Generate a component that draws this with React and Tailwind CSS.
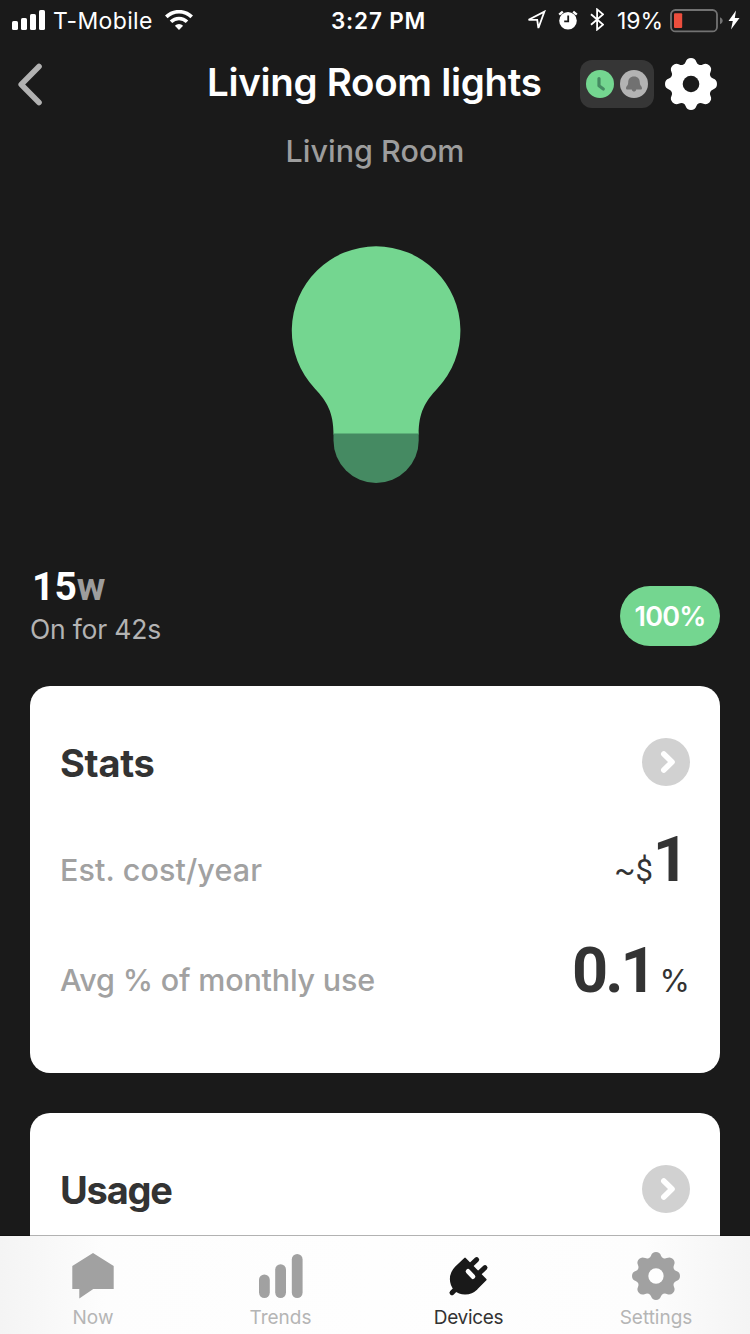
// Gear outline: eight round teeth joined by small concave arcs
const buildGearPath = () => {
  const dist = 20.3;
  const tooth = 5.7;
  const valley = 4.5;
  const half = Math.PI / 8;
  const valleyDist =
    dist * Math.cos(half) + Math.sqrt((tooth + valley) ** 2 - (dist * Math.sin(half)) ** 2);
  const polar = (r, a) => [r * Math.sin(a), -r * Math.cos(a)];
  const touch = (a, b) => {
    const k = tooth / (tooth + valley);
    const x = a[0] + (b[0] - a[0]) * k;
    const y = a[1] + (b[1] - a[1]) * k;
    return `${x.toFixed(2)} ${y.toFixed(2)}`;
  };

  let d = '';
  for (let i = 0; i < 8; i++) {
    const center = polar(dist, i * 2 * half);
    const before = polar(valleyDist, (i * 2 - 1) * half);
    const after = polar(valleyDist, (i * 2 + 1) * half);
    d += i === 0 ? `M${touch(center, before)}` : `A${valley} ${valley} 0 0 0 ${touch(center, before)}`;
    d += `A${tooth} ${tooth} 0 0 1 ${touch(center, after)}`;
  }
  return `${d}A${valley} ${valley} 0 0 0 ${touch(polar(dist, 0), polar(valleyDist, -half))}Z`;
};

const gearPath = buildGearPath();

const Gear = ({ size, color, hole }) => (
  <svg width={size} height={size} viewBox="-26 -26 52 52" className="shrink-0">
    <path d={gearPath} fill={color} />
    <circle r="8.3" fill={hole} />
  </svg>
);

const SignalIcon = () => (
  <svg width="33" height="20" viewBox="0 0 33 20" fill="#fff" className="shrink-0">
    <rect y="11" width="6" height="9" rx="1.6" />
    <rect x="9" y="8" width="6" height="12" rx="1.6" />
    <rect x="18" y="4" width="6" height="16" rx="1.6" />
    <rect x="27" width="6" height="20" rx="1.6" />
  </svg>
);

const WifiIcon = () => (
  <svg width="28" height="20" viewBox="0 0 28 20" className="shrink-0">
    <g fill="none" stroke="#fff" strokeWidth="3.6">
      <path d="M1.300 6.900a18 18 0 0 1 25.400 0" />
      <path d="M6 11.800a11.400 11.400 0 0 1 16 0" />
    </g>
    <path d="M14 20l-4.100-4.200a5.800 5.800 0 0 1 8.200 0z" fill="#fff" />
  </svg>
);

const LocationIcon = () => (
  <svg width="20" height="20" viewBox="0 0 20 20" className="shrink-0">
    <path d="M2.600 9.800L18.400 1.600 12.400 18 11.200 9.900z" fill="none" stroke="#fff" strokeWidth="1.800" />
  </svg>
);

const AlarmIcon = () => (
  <svg width="20" height="20" viewBox="0 0 20 20" className="shrink-0">
    <circle cx="10" cy="10.800" r="8.800" fill="#fff" />
    <path d="M1.200 4.600L4.800 1.600M18.800 4.600l-3.600-3" fill="none" stroke="#fff" strokeWidth="2.400" />
    <path d="M10.200 5.400v6H6.200" fill="none" stroke="#1a1a1a" strokeWidth="1.800" />
  </svg>
);

const BluetoothIcon = () => (
  <svg width="14" height="23" viewBox="0 0 14 23" className="shrink-0">
    <path d="M1 6.200l12 10.400-5.900 5V1.400l5.900 5L1 16.800" fill="none" stroke="#fff" strokeWidth="1.800" />
  </svg>
);

const BatteryIcon = () => (
  <svg width="54" height="24" viewBox="0 0 54 24" className="shrink-0">
    <rect x="1" y="1" width="46" height="21.400" rx="4.500" fill="none" stroke="#727272" strokeWidth="1.800" />
    <rect x="4" y="4.300" width="8.200" height="14.800" rx="1" fill="#eb4e3d" />
    <path d="M50 8.200c3.600 1.600 3.600 5.400 0 7z" fill="#727272" />
  </svg>
);

const BoltIcon = () => (
  <svg width="12" height="20" viewBox="0 0 12 20" className="shrink-0">
    <path d="M8 .5L.5 11h4.300L3 19.500 11.500 8H6.800z" fill="#fff" />
  </svg>
);

const StatusBar = () => (
  <div className="h-10 flex items-center pl-3 text-white font-['Inter'] text-[23px] leading-[38px] whitespace-nowrap">
    <SignalIcon />
    <div className="w-[112px] pl-2 pt-0.5 tracking-[0.35px]">T-Mobile</div>
    <div className="ml-2">
      <WifiIcon />
    </div>
    <div className="w-[334px] pl-[138px] pt-0.5 font-semibold tracking-[0.8px] text-[22.5px]">3:27 PM</div>
    <div className="-ml-px">
      <LocationIcon />
    </div>
    <div className="ml-3">
      <AlarmIcon />
    </div>
    <div className="ml-3 mb-px">
      <BluetoothIcon />
    </div>
    <div className="w-[66px] pl-[13px] pt-0.5 tracking-[-0.1px]">19%</div>
    <div className="mt-px">
      <BatteryIcon />
    </div>
    <div className="ml-1">
      <BoltIcon />
    </div>
  </div>
);

const Header = () => (
  <header className="h-[88px] grid grid-cols-[207px_373px_170px] items-center">
    <button className="pl-[18px] text-left">
      <svg width="25" height="43" viewBox="0 0 25 43">
        <path d="M21 3.500L3.200 21.500 21 39.500" fill="none" stroke="#b2b2b2" strokeWidth="5.600" strokeLinecap="round" strokeLinejoin="round" />
      </svg>
    </button>
    <h1 className="text-white text-[38.5px] leading-[48px] font-semibold tracking-[-0.3px] whitespace-nowrap -mt-1">Living Room lights</h1>
    <div className="flex items-center">
      <div className="w-[74px] h-12 rounded-xl bg-[#363636] flex items-center justify-center gap-1.5">
        <svg width="28" height="28" viewBox="0 0 28 28">
          <circle cx="14" cy="14" r="14" fill="#74d690" />
          <path d="M13 8.500v7.300l4.300 3.200" fill="none" stroke="#458a62" strokeWidth="3.200" strokeLinecap="round" strokeLinejoin="round" />
        </svg>
        <svg width="28" height="28" viewBox="0 0 28 28">
          <circle cx="14" cy="14" r="14" fill="#b3b3b3" />
          <path d="M14 6.600c-3.800 0-5.800 2.600-5.800 5.800 0 3.200-2.200 3.600-2.200 5.800 0 .9.500 1.300 1.500 1.300h4.300c.4 2.800 4 2.800 4.400 0h4.300c1 0 1.500-.4 1.500-1.300 0-2.200-2.200-2.600-2.200-5.800 0-3.200-2-5.800-5.800-5.800z" fill="#717171" />
        </svg>
      </div>
      <div className="ml-[11px]">
        <Gear size={52} color="#fff" hole="#1a1a1a" />
      </div>
    </div>
  </header>
);

const Bulb = () => (
  <svg width="170" height="238" viewBox="291 245.500 170 238" className="mx-auto translate-x-px">
    <path d="M333.500 434C333.500 412 327 401 314.800 388A84.300 84.300 0 1 1 437.400 388C425.200 401 418.700 412 418.700 434z" fill="#74d690" />
    <path d="M333.500 433h85.200v7a42.600 42.600 0 0 1-85.200 0z" fill="#458a62" />
  </svg>
);

const MoreButton = () => (
  <svg width="48" height="48" viewBox="0 0 48 48">
    <circle cx="24" cy="24" r="24" fill="#d1d1d1" />
    <path d="M21.800 16l8.200 8-8.200 8" fill="none" stroke="#fff" strokeWidth="5.600" strokeLinecap="round" strokeLinejoin="round" />
  </svg>
);

const CardTitle = ({ children, className }) => (
  <div className="flex items-center justify-between h-12">
    <h2 className={`text-[#333] text-[38px] leading-[48px] font-bold pt-0.5 ${className}`}>{children}</h2>
    <MoreButton />
  </div>
);

const NowIcon = () => (
  <svg width="42" height="46" viewBox="0 0 42 46" fill="#a1a1a1">
    <path d="M21 0l20.700 13v23H21.300L7.300 45.400V36H.3V13z" />
  </svg>
);

const TrendsIcon = () => (
  <svg width="44" height="44" viewBox="0 0 44 44" fill="#a1a1a1" className="ml-0.5">
    <rect y="20.400" width="10.800" height="23.600" rx="5.400" />
    <rect x="16.200" y="10.200" width="10.800" height="33.800" rx="5.400" />
    <rect x="32.800" width="10.800" height="44" rx="5.400" />
  </svg>
);

const DevicesIcon = () => (
  <svg width="41" height="41" viewBox="217 317 123 123">
    <g stroke="#191919" strokeLinecap="round" strokeLinejoin="round">
      <path d="M268 325L241 351C219 373 223 402 238 418C254 433 283 434 303 415L330 388z" fill="#191919" strokeWidth="6" />
      <path d="M288 342l15-14M312 367l16-15M229 427l12-12" strokeWidth="15" />
    </g>
    <path d="M277 363l15 16" stroke="#fefefe" strokeWidth="14" strokeLinecap="round" />
  </svg>
);

const tabs = [
  { label: 'Now', icon: <NowIcon />, text: 'text-[#b5b5b5]' },
  { label: 'Trends', icon: <TrendsIcon />, text: 'text-[#b5b5b5] pl-px' },
  { label: 'Devices', icon: <DevicesIcon />, text: 'text-[#333] tracking-[-0.3px] pl-px' },
  { label: 'Settings', icon: <Gear size={48} color="#a1a1a1" hole="#fefefe" />, text: 'text-[#b5b5b5]' },
];

const TabBar = () => (
  <nav className="fixed bottom-0 inset-x-0 h-[99px] border-t border-black/30 bg-clip-padding bg-[linear-gradient(90deg,#f4f4f4_0%,#fdfdfd_14%,#fefefe_50%,#fdfdfd_86%,#f4f4f4_100%)] grid grid-cols-[186px_188px_188px_188px]">
    {tabs.map((tab) => (
      <div key={tab.label} className="flex flex-col items-center pt-4">
        <div className="h-12 flex items-center">{tab.icon}</div>
        <span className={`text-[19px] leading-[24px] mt-1.5 ${tab.text}`}>{tab.label}</span>
      </div>
    ))}
  </nav>
);

const App = () => {
  return (
    <div className="h-[1334px] overflow-hidden bg-[#1a1a1a] font-['Inter',sans-serif]">
      <StatusBar />
      <Header />
      <p className="mt-[3px] h-10 text-center text-[#9d9d9d] text-[30.5px] leading-[40px] font-medium">Living Room</p>
      <div className="mt-[74.5px]">
        <Bulb />
      </div>

      <div className="mt-[78.5px] h-[124px] px-[30px] flex justify-between">
        <div>
          <div className="h-12 pl-[2px] font-['Roboto'] text-[39px] leading-[50px] font-bold text-white">
            15<span className="text-[#9d9d9d]">w</span>
          </div>
          <div className="text-[#b3b3b3] text-[26.5px] leading-[38px] tracking-[-0.2px] whitespace-nowrap">On for 42s</div>
        </div>
        <div className="mt-6 w-[100px] h-[60px] pt-0.5 rounded-full bg-[#74d690] text-white text-[27px] tracking-[-0.8px] font-semibold flex items-center justify-center">
          100%
        </div>
      </div>

      <section className="mx-[30px] h-[387px] rounded-[20px] bg-white px-[30px] pt-[52px]">
        <CardTitle className="tracking-[-0.3px]">Stats</CardTitle>
        <div className="mt-[54px] h-[60px] flex items-center justify-between">
          <span className="text-[#a1a1a1] text-[30.5px] tracking-[0.1px] font-medium whitespace-nowrap">Est. cost/year</span>
          <div className="flex items-baseline text-[#333] leading-[60px] -mt-[9px] pr-px font-['Roboto']">
            <span className="text-[31px]">~$</span>
            <span className="text-[63px] font-bold">1</span>
          </div>
        </div>
        <div className="mt-[50px] h-[60px] flex items-center justify-between">
          <span className="text-[#a1a1a1] text-[30.5px] tracking-[-0.2px] font-medium whitespace-nowrap">Avg % of monthly use</span>
          <div className="flex items-baseline text-[#333] leading-[60px] -mt-[9px] font-['Roboto']">
            <span className="text-[63px] font-bold tracking-[-3px]">0.1</span>
            <span className="text-[31px] ml-1.5 font-['Inter']">%</span>
          </div>
        </div>
      </section>

      <section className="mx-[30px] mt-10 h-[387px] rounded-[20px] bg-white px-[30px] pt-[52px]">
        <CardTitle className="tracking-[-1.2px]">Usage</CardTitle>
      </section>
      <TabBar />
    </div>
  );
};

export default App;
